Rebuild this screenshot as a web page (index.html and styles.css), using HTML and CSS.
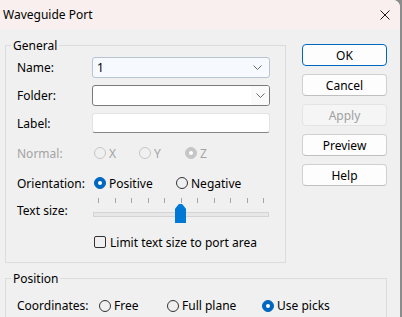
FILE: index.html
```html
<!DOCTYPE html>
<html lang="en">
<head>
    <meta charset="UTF-8">
    <title>Waveguide Port</title>
    <link rel="stylesheet" href="styles.css">
</head>
<body>
    <div class="window">
        <div class="titlebar">
            <span class="title">Waveguide Port</span>
            <svg class="close" width="10" height="10" viewBox="0 0 10 10">
                <path d="M0.5 0.5 L9.5 9.5 M9.5 0.5 L0.5 9.5" stroke="#1a1a1a" stroke-width="1" fill="none"/>
            </svg>
        </div>

        <div class="dialog-body">
            <div class="top">
                <fieldset class="group general">
                    <legend>General</legend>
                    <div class="group-body">
                        <div class="row row-name">
                            <span class="field-label">Name:</span>
                            <div class="combo combo-hot">
                                <span class="combo-value">1</span>
                                <svg class="chevron" width="9" height="5" viewBox="0 0 9 5"><path d="M0.5 0.5 L4.5 4.5 L8.5 0.5" stroke="#6b6b6b" fill="none"/></svg>
                            </div>
                        </div>
                        <div class="row row-folder">
                            <span class="field-label">Folder:</span>
                            <div class="combo combo-dark">
                                <span class="combo-value"></span>
                                <span class="combo-button">
                                    <svg class="chevron" width="9" height="5" viewBox="0 0 9 5"><path d="M0.5 0.5 L4.5 4.5 L8.5 0.5" stroke="#6b6b6b" fill="none"/></svg>
                                </span>
                            </div>
                        </div>
                        <div class="row row-label">
                            <span class="field-label">Label:</span>
                            <div class="textbox"></div>
                        </div>
                        <div class="row row-normal disabled">
                            <span class="field-label">Normal:</span>
                            <span class="option opt-x"><span class="radio"></span>X</span>
                            <span class="option opt-y"><span class="radio"></span>Y</span>
                            <span class="option"><span class="radio checked"></span>Z</span>
                        </div>
                        <div class="row row-orient">
                            <span class="field-label">Orientation:</span>
                            <span class="option opt-pos"><span class="radio checked"></span>Positive</span>
                            <span class="option"><span class="radio"></span>Negative</span>
                        </div>
                        <div class="row row-slider">
                            <span class="field-label">Text size:</span>
                            <div class="slider">
                                <div class="ticks">
                                    <i></i><i></i><i></i><i></i><i></i><i></i><i></i><i></i><i></i><i></i><i></i>
                                </div>
                                <div class="track"></div>
                                <div class="thumb"></div>
                            </div>
                        </div>
                        <div class="row row-check">
                            <span class="checkbox"></span>
                            <span>Limit text size to port area</span>
                        </div>
                    </div>
                </fieldset>

                <div class="buttons">
                    <button class="btn btn-default">OK</button>
                    <button class="btn">Cancel</button>
                    <button class="btn" disabled>Apply</button>
                    <button class="btn">Preview</button>
                    <button class="btn">Help</button>
                </div>
            </div>

            <fieldset class="group position">
                <legend>Position</legend>
                <div class="group-body">
                    <div class="row row-coords">
                        <span class="field-label coords-label">Coordinates:</span>
                        <span class="option opt-free"><span class="radio"></span>Free</span>
                        <span class="option opt-plane"><span class="radio"></span>Full plane</span>
                        <span class="option"><span class="radio checked"></span>Use picks</span>
                    </div>
                </div>
            </fieldset>
        </div>
    </div>
</body>
</html>
```

FILE: styles.css
```css
:root {
    --face: #f0f0f0;
    --accent: #0067c0;
    --group-line: #dcdcdc;
    --disabled: #a3a3a3;
}

* {
    margin: 0;
    padding: 0;
    box-sizing: border-box;
}

body {
    width: 402px;
    height: 317px;
    overflow: hidden;
    background: #8c8c8c;
    font-family: "Noto Sans", "Open Sans", sans-serif;
    font-size: 12px;
    color: #000;
}

.window {
    width: 400px;
    height: 317px;
    background: var(--face);
    border-top-right-radius: 7px;
    overflow: hidden;
}

/* title bar */
.titlebar {
    height: 29px;
    background: #f9efee;
    display: flex;
    align-items: center;
    justify-content: space-between;
    padding: 0 10px 0 3px;
}

.title {
    line-height: 16px;
}

.dialog-body {
    padding: 9px 0 0 5px;
}

.top {
    display: flex;
    align-items: flex-start;
}

/* group boxes */
.group {
    border: 1px solid var(--group-line);
    border-radius: 0;
}

.group legend {
    margin-left: 5px;
    padding: 0 2px;
    line-height: 15px;
}

.group-body {
    padding-left: 11px;
}

.general {
    width: 281px;
    height: 225px;
}

.general .group-body {
    padding-top: 4px;
}

.position {
    width: 382px;
    height: 60px;
    margin-top: 8px;
}

.position .group-body {
    padding-top: 9px;
}

/* rows */
.row {
    display: flex;
    align-items: center;
    height: 21px;
}

.field-label {
    width: 75px;
    flex: none;
}

.row-folder,
.row-label {
    margin-top: 7px;
}

.row-label {
    height: 20px;
}

.row-normal,
.row-orient {
    margin-top: 10px;
    height: 20px;
}

.row-slider {
    margin-top: 3px;
    height: 29px;
}

.row-check {
    margin-top: 9px;
    height: 16px;
    padding-left: 77px;
}

.disabled {
    color: var(--disabled);
}

/* inputs */
.combo {
    width: 178px;
    height: 21px;
    display: flex;
    align-items: center;
    justify-content: space-between;
    border-radius: 3px;
    background: #fff;
}

.combo-hot {
    background: #f6f9fd;
    border: 1px solid #b9c4d2;
    padding: 0 4px 0 4px;
}

.combo-dark {
    border: 1px solid #7a7a7a;
}

.combo-value {
    line-height: 19px;
}

.combo-button {
    width: 18px;
    height: 19px;
    background: #fafafa;
    display: flex;
    align-items: center;
    justify-content: center;
    border-radius: 0 2px 2px 0;
}

.combo-hot .chevron {
    margin-right: 3px;
}

.textbox {
    width: 178px;
    height: 20px;
    background: #fff;
    border: 1px solid #e3e3e3;
    border-bottom-color: #868686;
    border-radius: 3px;
}

/* radios */
.option {
    display: flex;
    align-items: center;
    gap: 3px;
    padding-left: 2px;
}

.opt-x {
    width: 45px;
}

.opt-y {
    width: 46px;
}

.opt-pos {
    width: 82px;
}

.coords-label {
    width: 80px;
}

.opt-free {
    width: 68px;
}

.opt-plane {
    width: 95px;
}

.radio {
    width: 12px;
    height: 12px;
    border-radius: 50%;
    border: 1px solid #333;
    flex: none;
    position: relative;
}

.radio.checked {
    background: var(--accent);
    border-color: var(--accent);
}

.radio.checked::after {
    content: "";
    position: absolute;
    left: 3px;
    top: 3px;
    width: 4px;
    height: 4px;
    border-radius: 50%;
    background: #fff;
}

.disabled .radio {
    border-color: #c6c6c6;
}

.disabled .radio.checked {
    background: #c6c6c6;
}

/* slider */
.slider {
    width: 176px;
    height: 29px;
    position: relative;
    margin-left: 1px;
}

.ticks {
    position: absolute;
    left: 5px;
    top: 2px;
    width: 166px;
    display: flex;
    justify-content: space-between;
}

.ticks i {
    width: 1px;
    height: 5px;
    background: #a5a5a5;
}

.track {
    position: absolute;
    left: 0;
    top: 16px;
    width: 176px;
    height: 5px;
    background: #e7e7e7;
    border: 1px solid #d4d4d4;
}

.thumb {
    position: absolute;
    left: 82px;
    top: 8px;
    width: 11px;
    height: 19px;
    background: #0078d4;
    clip-path: polygon(0 25%, 35% 0, 65% 0, 100% 25%, 100% 100%, 0 100%);
}

/* checkbox */
.checkbox {
    width: 12px;
    height: 12px;
    border: 1px solid #333;
    border-radius: 2px;
    margin-right: 4px;
    flex: none;
}

/* buttons */
.buttons {
    display: flex;
    flex-direction: column;
    gap: 8px;
    margin-left: 16px;
    margin-top: 6px;
}

.btn {
    width: 85px;
    height: 22px;
    font-family: inherit;
    font-size: 12px;
    color: #000;
    background: #fdfdfd;
    border: 1px solid #d0d0d0;
    border-bottom-color: #bfbfbf;
    border-radius: 4px;
}

.btn-default {
    border: 1px solid var(--accent);
}

.btn:disabled {
    background: #f5f5f5;
    border-color: #e4e4e4;
    color: #a0a0a0;
}
```
